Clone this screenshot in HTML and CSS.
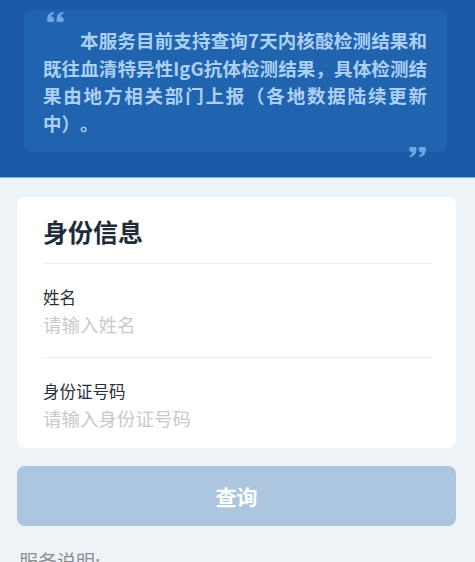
FILE: index.html
```html
<!DOCTYPE html>
<html lang="zh-CN">
<head>
<meta charset="utf-8">
<title>核酸检测结果查询</title>
<link rel="stylesheet" href="styles.css">
</head>
<body>
<header class="hero">
  <div class="notice">
    <svg class="quote quote-open" width="18" height="10" viewBox="0 0 18 10" aria-hidden="true">
      <path d="M0.4 6.3 C0.4 3 2.4 0.7 6.6 0 L7.1 1.5 C5.2 2.2 4.1 3.2 3.8 4.3 A3.6 3.6 0 1 1 0.4 6.3 Z"/>
      <path d="M9.9 6.3 C9.9 3 11.9 0.7 16.1 0 L16.6 1.5 C14.7 2.2 13.6 3.2 13.3 4.3 A3.6 3.6 0 1 1 9.9 6.3 Z"/>
    </svg>
    <p class="notice-text">
      <span class="ln ln-full ln-first">本服务目前支持查询7天内核酸检测结果和</span>
      <span class="ln ln-full">既往血清特异性IgG抗体检测结果，具体检测结</span>
      <span class="ln ln-full">果由地方相关部门上报（各地数据陆续更新</span>
      <span class="ln">中）。</span>
    </p>
  </div>
  <svg class="quote quote-close" width="18" height="10" viewBox="0 0 18 10" aria-hidden="true">
    <g transform="rotate(180 9 5)">
      <path d="M0.4 6.3 C0.4 3 2.4 0.7 6.6 0 L7.1 1.5 C5.2 2.2 4.1 3.2 3.8 4.3 A3.6 3.6 0 1 1 0.4 6.3 Z"/>
      <path d="M9.9 6.3 C9.9 3 11.9 0.7 16.1 0 L16.6 1.5 C14.7 2.2 13.6 3.2 13.3 4.3 A3.6 3.6 0 1 1 9.9 6.3 Z"/>
    </g>
  </svg>
</header>

<main class="content">
  <section class="card">
    <h2 class="card-title">身份信息</h2>
    <div class="field">
      <label class="field-label">姓名</label>
      <div class="field-input">请输入姓名</div>
    </div>
    <div class="field">
      <label class="field-label">身份证号码</label>
      <div class="field-input">请输入身份证号码</div>
    </div>
  </section>

  <button class="btn-query" type="button">查询</button>

  <p class="service-title">服务说明:</p>
</main>
</body>
</html>
```

FILE: styles.css
```css
* { box-sizing: border-box; }

html, body {
  margin: 0;
  padding: 0;
}

body {
  background: #eef3f7;
  font-family: "Noto Sans CJK SC", "Noto Sans", sans-serif;
  text-spacing-trim: space-all;
  width: 475px;
  height: 562px;
  overflow: hidden;
}

.hero {
  position: relative;
  height: 178px;
  background: #1a5aa6;
  border-bottom: 1px solid #7fb0df;
  padding: 10px 28px 0 24px;
}

.notice {
  background: #2063ae;
  border-radius: 7px;
  height: 142px;
  padding: 17px 20px 0 19px;
}

.notice-text {
  margin: 0;
  color: #acd0f4;
  font-size: 18.5px;
  font-weight: 700;
  line-height: 27.5px;
}

.ln {
  display: block;
  white-space: nowrap;
}

.ln-full {
  text-align: justify;
  text-align-last: justify;
}

.ln-first {
  text-indent: 37px;
}

.quote {
  position: absolute;
  display: block;
  fill: #6ea7e6;
}

.quote-open {
  left: 47px;
  top: 12px;
}

.quote-close {
  left: 408px;
  top: 147px;
}

.content {
  padding: 19px 19px 0 17px;
}

.card {
  background: #ffffff;
  border-radius: 8px;
  padding: 17px 24px 0 26px;
}

.card-title {
  margin: 0;
  font-size: 25px;
  font-weight: 700;
  line-height: 35px;
  color: #1f2b38;
  padding-bottom: 14px;
  border-bottom: 1px solid #eeeeee;
}

.field {
  display: flex;
  flex-direction: column;
  padding: 21px 0 18px;
}

.field + .field {
  border-top: 1px solid #eeeeee;
  padding-bottom: 15px;
}

.field-label {
  font-size: 16.5px;
  line-height: 24px;
  color: #2a2f36;
}

.field-input {
  font-size: 18.5px;
  line-height: 30px;
  color: #c9c9c9;
}

.btn-query {
  display: block;
  width: 100%;
  height: 60px;
  margin-top: 18px;
  border: none;
  border-radius: 8px;
  background: #abc6de;
  color: #ffffff;
  font-family: "Noto Sans CJK SC", "Noto Sans", sans-serif;
  font-size: 21px;
  font-weight: 700;
  padding: 0;
}

.service-title {
  margin: 21px 0 0 2px;
  font-size: 19px;
  line-height: 28px;
  color: #8a8d92;
}
```
